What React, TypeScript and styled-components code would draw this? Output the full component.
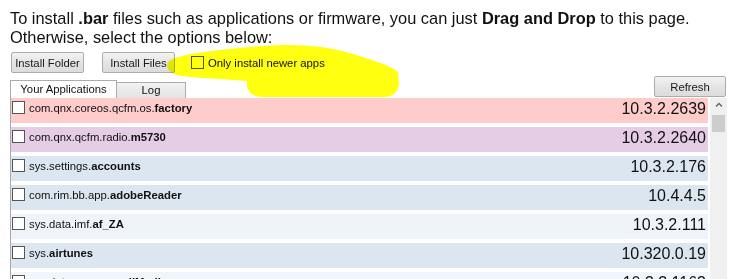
import styled, { createGlobalStyle } from 'styled-components';

type AppRow = {
  prefix: string;
  name: string;
  version: string;
  tone: string;
};

const rows: AppRow[] = [
  { prefix: 'com.qnx.coreos.qcfm.os.', name: 'factory', version: '10.3.2.2639', tone: '#ffcccc' },
  { prefix: 'com.qnx.qcfm.radio.', name: 'm5730', version: '10.3.2.2640', tone: '#e6cde6' },
  { prefix: 'sys.settings.', name: 'accounts', version: '10.3.2.176', tone: '#dce6f0' },
  { prefix: 'com.rim.bb.app.', name: 'adobeReader', version: '10.4.4.5', tone: '#dce6f0' },
  { prefix: 'sys.data.imf.', name: 'af_ZA', version: '10.3.2.111', tone: '#eef4fa' },
  { prefix: 'sys.', name: 'airtunes', version: '10.320.0.19', tone: '#dce6f0' },
  { prefix: 'sys.data.smsmms.', name: 'allMedia', version: '10.3.2.1163', tone: '#f0f6fb' },
  { prefix: 'sys.', name: 'android', version: '10.3.2.1165', tone: '#dce6f0' },
];

export default function App() {
  return (
    <>
      <GlobalStyle />
      <Page>
        <Intro>
          To install <b>.bar</b> files such as applications or firmware, you can just <b>Drag and Drop</b> to this page.
          <br />
          Otherwise, select the options below:
        </Intro>

        <Toolbar>
          <Button>Install Folder</Button>
          <Button>Install Files</Button>
          <CheckLabel>
            <Box />
            Only install newer apps
          </CheckLabel>
        </Toolbar>

        <TabRow>
          <Tabs>
            <Tab $active>Your Applications</Tab>
            <Tab>Log</Tab>
          </Tabs>
          <RefreshButton>Refresh</RefreshButton>
        </TabRow>

        <TableFrame>
          <RowList>
            {rows.map((r) => (
              <Row key={r.prefix + r.name} $tone={r.tone}>
                <RowName>
                  <Box />
                  <span>
                    {r.prefix}
                    <b>{r.name}</b>
                  </span>
                </RowName>
                <Version>{r.version}</Version>
              </Row>
            ))}
          </RowList>
          <Scrollbar>
            <svg width="8" height="5" viewBox="0 0 8 5">
              <path d="M1 4.5 L4 1.5 L7 4.5" fill="none" stroke="#606060" strokeWidth="1.3" />
            </svg>
            <Thumb />
          </Scrollbar>
        </TableFrame>

        {/* highlighter scribble over the checkbox option */}
        <Marker width="729" height="279" viewBox="0 0 729 279">
          <path
            d="M168 62 C 176 54, 215 50, 262 46 C 300 43, 330 46, 356 55 C 375 61, 392 66, 398 72
               L 399 84 C 398 92, 394 96, 385 97 L 262 97 C 250 96, 246 90, 247 81
               C 225 79, 195 78, 182 76 C 170 74, 165 68, 168 62 Z"
            fill="#ffff10"
          />
        </Marker>
      </Page>
    </>
  );
}

const GlobalStyle = createGlobalStyle`
  html, body {
    margin: 0;
    background: #ffffff;
    overflow: hidden;
  }
  body {
    font-family: "Liberation Sans", Arial, sans-serif;
    color: #000;
  }
`;

const Page = styled.div`
  position: relative;
  padding: 9px 2px 0 10px;
`;

const Intro = styled.p`
  margin: 0;
  font-size: 16.4px;
  line-height: 19px;
  color: #111;

  b {
    font-weight: 700;
  }
`;

const Toolbar = styled.div`
  display: flex;
  align-items: center;
  gap: 18px;
  margin-top: 5px;
  padding-left: 1px;
  height: 21px;
`;

const Button = styled.button`
  height: 21px;
  width: 73px;
  padding: 0;
  border: 1px solid #acacac;
  border-radius: 2px;
  background: linear-gradient(#f3f3f3, #e4e4e4 50%, #dcdcdc);
  font-family: "Liberation Sans", Arial, sans-serif;
  font-size: 11.3px;
  color: #1a1a1a;
`;

const CheckLabel = styled.label`
  display: flex;
  align-items: center;
  gap: 4px;
  font-size: 11.3px;
  color: #111;
  margin-left: -2px;
`;

const Box = styled.span`
  flex: none;
  width: 11px;
  height: 11px;
  border: 1px solid #555;
  background: #fff;
`;

const TabRow = styled.div`
  display: flex;
  justify-content: space-between;
  align-items: flex-start;
  margin-top: 3px;
  height: 22px;
`;

const Tabs = styled.div`
  display: flex;
  align-items: flex-end;
  align-self: flex-end;
`;

const Tab = styled.div<{ $active?: boolean }>`
  box-sizing: border-box;
  height: ${({ $active }) => ($active ? '18px' : '16px')};
  width: ${({ $active }) => ($active ? '107px' : '70px')};
  padding-top: ${({ $active }) => ($active ? '2px' : '1px')};
  border: 1px solid #acacac;
  border-bottom: none;
  background: ${({ $active }) => ($active ? '#ffffff' : 'linear-gradient(#f2f2f2, #e3e3e3)')};
  margin-left: ${({ $active }) => ($active ? '0' : '-1px')};
  font-size: 11.3px;
  text-align: center;
  color: #111;
`;

const RefreshButton = styled(Button)`
  width: 72px;
  margin-right: 1px;
`;

const TableFrame = styled.div`
  display: flex;
  border-left: 1px solid #a9a9a9;
  height: 200px;
`;

const RowList = styled.div`
  flex: 1;
  display: flex;
  flex-direction: column;
  gap: 4px;
  padding-right: 2px;
`;

const Row = styled.div<{ $tone: string }>`
  display: flex;
  justify-content: space-between;
  align-items: flex-start;
  height: 25px;
  flex: none;
  padding: 2px 2px 0 1px;
  box-sizing: border-box;
  background: ${({ $tone }) => $tone};
`;

const RowName = styled.div`
  display: flex;
  align-items: center;
  gap: 4px;
  margin-top: 1px;
  font-size: 11.3px;
  color: #111;

  b {
    font-weight: 700;
  }
`;

const Version = styled.div`
  font-size: 16px;
  line-height: 18px;
  color: #111;
`;

const Scrollbar = styled.div`
  width: 17px;
  flex: none;
  background: #f0f0f0;
  display: flex;
  flex-direction: column;
  align-items: center;
  padding-top: 4px;
  gap: 8px;
`;

const Thumb = styled.div`
  width: 13px;
  height: 17px;
  background: #cdcdcd;
`;

const Marker = styled.svg`
  position: absolute;
  top: 0;
  left: 0;
  pointer-events: none;
  mix-blend-mode: multiply;
`;
